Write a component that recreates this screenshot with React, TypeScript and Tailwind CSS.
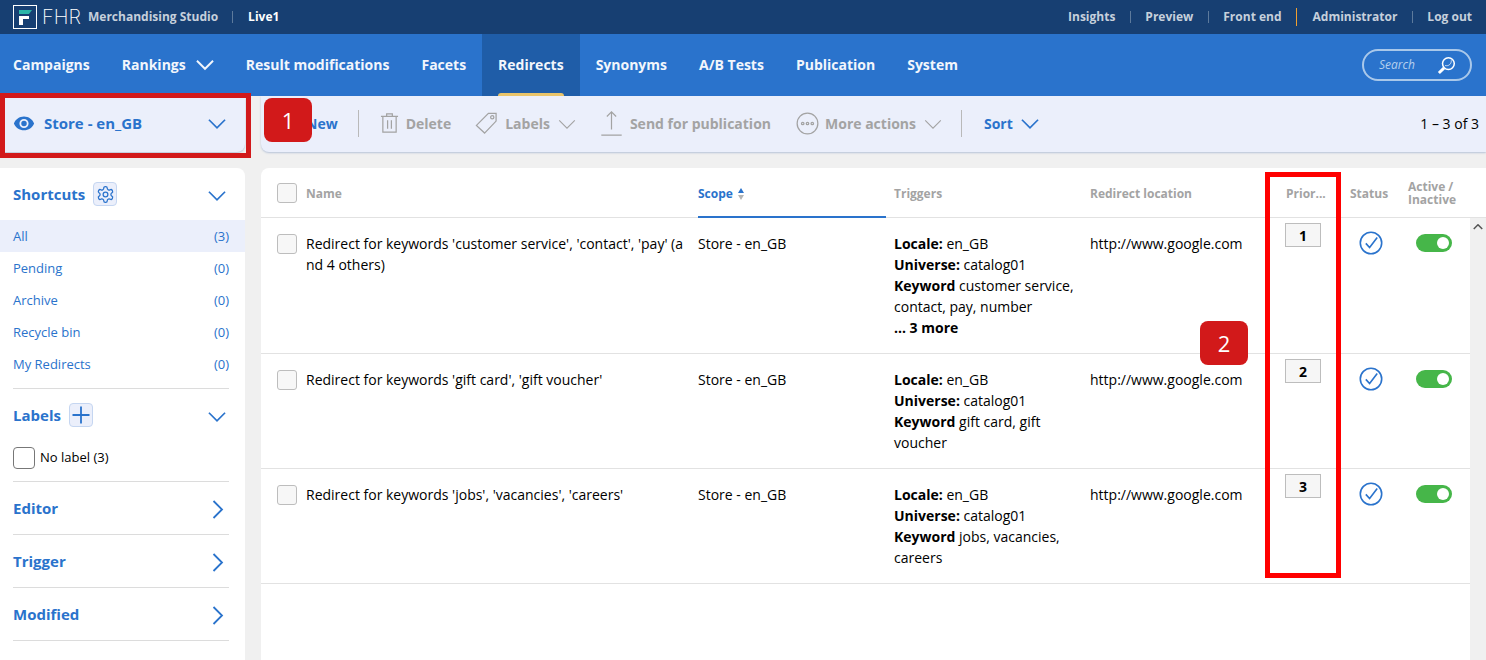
import React from "react";

const Chevron = ({ dir = "down", className = "", sw = 1.8 }: { dir?: "down" | "right" | "up"; className?: string; sw?: number }) => {
  const d = dir === "down" ? "M1 1.5 L9.5 10 L18 1.5" : dir === "right" ? "M1.5 1 L10 9.5 L1.5 18" : "M1 10 L9.5 1.5 L18 10";
  const vb = dir === "right" ? "0 0 12 19" : "0 0 19 12";
  return (
    <svg viewBox={vb} fill="none" stroke="currentColor" strokeWidth={sw} className={className}>
      <path d={d} />
    </svg>
  );
};

const Trigger = ({ kw, more }: { kw: string; more?: boolean }) => (
  <div className="w-[184px]">
    <div><b className="font-bold">Locale:</b> en_GB</div>
    <div><b className="font-bold">Universe:</b> catalog01</div>
    <div><b className="font-bold">Keyword</b> {kw}</div>
    {more && <div className="font-bold">... 3 more</div>}
  </div>
);

const Row = ({ name, kw, more, prio, h }: { name: string; kw: string; more?: boolean; prio: number; h: string }) => (
  <div className={`grid grid-cols-[437px_196px_196px_195px_65px_58px_78px] border-b border-[#e2e2e2] text-[14px] leading-[21px] text-black ${h}`}>
    <div className="flex pl-4 pt-4">
      <span className="h-5 w-5 shrink-0 rounded-[3px] border border-[#bdbdbd] bg-[#f7f7f7]" />
      <div className="-mt-px ml-[9px] w-[378px] break-all">{name}</div>
    </div>
    <div className="pt-[15px]">Store - en_GB</div>
    <div className="pt-[15px]"><Trigger kw={kw} more={more} /></div>
    <div className="pt-[15px]">http://www.google.com</div>
    <div className="pt-[5px]">
      <div className="flex h-6 w-9 items-center justify-center border border-[#bdbdbd] bg-[#f6f6f6] text-[14px] font-bold">{prio}</div>
    </div>
    <div className="pt-[13px] pl-[9px]">
      <svg viewBox="0 0 24 24" className="h-6 w-6 text-[#2a73cc]" fill="none" stroke="currentColor" strokeWidth="1.6">
        <circle cx="12" cy="12" r="10.7" />
        <path d="M6.8 12.4 L10.6 16.6 L18.2 6.6" />
      </svg>
    </div>
    <div className="pt-[16px] pl-2">
      <div className="flex h-[18px] w-9 items-center justify-end rounded-full bg-[#46b649] pr-[3px]">
        <span className="h-3 w-3 rounded-full bg-white" />
      </div>
    </div>
  </div>
);

const Shortcut = ({ label, n, active }: { label: string; n: number; active?: boolean }) => (
  <div className={`flex h-8 items-center justify-between pl-[13px] pr-4 pt-0.5 text-[13px] text-[#2a73cc] ${active ? "bg-[#ebeffb]" : ""}`}>
    <span>{label}</span>
    <span>({n})</span>
  </div>
);

const Collapsed = ({ label }: { label: string }) => (
  <div className="ml-[13px] mr-4 flex h-[53px] items-center justify-between border-b border-[#dcdcdc] pr-[5px] text-[15px] font-bold text-[#2a73cc]">
    <span>{label}</span>
    <Chevron dir="right" className="mt-0.5 h-[19px] w-3" />
  </div>
);

const Sep = ({ orange }: { orange?: boolean }) => (
  <span className={orange ? "ml-[14px] mr-4 h-[18px] w-px bg-[#f0a030]" : "ml-[15px] mr-[14px] h-3 w-px bg-[#5d7a9c]"} />
);

const NavItem = ({ children, active }: { children: React.ReactNode; active?: boolean }) => (
  <div className={`relative flex h-full items-center px-4 pb-0.5 ${active ? "bg-[#1f5da8]" : ""}`}>
    {children}
    {active && <span className="absolute bottom-0 left-4 right-4 h-[3px] rounded-t bg-[#e9c46a]" />}
  </div>
);

const Disabled = ({ icon, label, chevron, cls }: { icon: React.ReactNode; label: string; chevron?: boolean; cls: string }) => (
  <div className={`flex items-center text-[14px] font-bold text-[#a3a3a3] ${cls}`}>
    {icon}
    <span>{label}</span>
    {chevron && <Chevron className="ml-[8px] mt-0.5 h-[11px] w-[18px]" sw={1.2} />}
  </div>
);

export default function App() {
  return (
    <div className="relative h-[660px] w-[1486px] overflow-hidden bg-[#f0f0f0]" style={{ fontFamily: '"Open Sans", sans-serif' }}>
      {/* Top bar */}
      <div className="flex h-[34px] items-center justify-between bg-[#173f72] pl-[13px] pr-[14px]">
        <div className="flex items-center">
          <svg viewBox="0 0 24 24" className="h-[24px] w-[24px]" fill="none">
            <rect x="0.5" y="0.5" width="23" height="23" stroke="#fff" />
            <path d="M6 5 H19 L16 9 H6 Z" fill="#2bb5a8" />
            <path d="M6 11 H16 V14 H10 V20 H6 Z" fill="#fff" />
          </svg>
          <span className="ml-[5px] w-[38px] text-[20px] font-extralight leading-none text-white" style={{ fontFamily: 'Inter, sans-serif' }}>FHR</span>
          <span className="ml-[8px] text-[12px] font-bold text-[#c6d0dc]">Merchandising Studio</span>
          <span className="ml-[14px] mr-[15px] h-3 w-px bg-[#5d7a9c]" />
          <span className="text-[12px] font-bold text-white">Live1</span>
        </div>
        <div className="flex items-center text-[12px] font-bold text-[#c6d0dc]">
          <span>Insights</span><Sep />
          <span>Preview</span><Sep />
          <span>Front end</span><Sep orange />
          <span>Administrator</span><Sep />
          <span>Log out</span>
        </div>
      </div>

      {/* Nav */}
      <div className="flex h-[62px] items-center justify-between bg-[#2a73cc] pr-[14px] text-[14px] font-bold text-[#f2f6fc]">
        <div className="-ml-[3px] flex h-full items-center">
          <NavItem>Campaigns</NavItem>
          <NavItem>
            Rankings
            <Chevron className="ml-[10px] mt-0.5 h-3 w-[18px]" sw={2} />
          </NavItem>
          <NavItem>Result modifications</NavItem>
          <NavItem>Facets</NavItem>
          <NavItem active>Redirects</NavItem>
          <NavItem>Synonyms</NavItem>
          <NavItem>A/B Tests</NavItem>
          <NavItem>Publication</NavItem>
          <NavItem>System</NavItem>
        </div>
        <div className="flex h-8 w-[110px] items-center justify-between rounded-full border-2 border-[#a9c8ea] pl-[15px] pr-[14px]">
          <span className="text-[12px] font-normal italic text-[#b5d0ee]">Search</span>
          <svg viewBox="0 0 20 20" className="h-[19px] w-[19px] text-white" fill="none" stroke="currentColor">
            <circle cx="12" cy="8" r="6.2" strokeWidth="1.6" />
            <path d="M8.500 10.500 A5 5 0 0 0 15 5" strokeWidth="0.8" transform="translate(0 -0.5)" />
            <path d="M7.5 12.5 L2 18" strokeWidth="3" />
          </svg>
        </div>
      </div>

      {/* Toolbar row */}
      <div className="flex h-[56px]">
        <div className="flex w-[245px] items-center justify-between rounded-br-lg bg-[#ebeffb] pb-[2px] pl-[13px] pr-[19px] shadow-[0_1px_2px_rgba(100,130,180,0.4)]">
          <div className="flex items-center text-[15px] font-bold text-[#2a73cc]">
            <svg viewBox="0 0 24 24" className="mr-[9px] h-[22px] w-[22px]" fill="currentColor">
              <path d="M12 5C7 5 2.7 8.100 1 12.500 2.700 16.900 7 20 12 20s9.300-3.100 11-7.500C21.300 8.100 17 5 12 5zm0 12.500a5 5 0 1 1 0-10 5 5 0 0 1 0 10zm0-8a3 3 0 1 0 0 6 3 3 0 0 0 0-6z" />
            </svg>
            Store - en_GB
          </div>
          <Chevron className="mt-0.5 h-3 w-[18px] text-[#2a73cc]" />
        </div>
        <div className="ml-4 flex flex-1 items-center rounded-bl-lg bg-[#ebeffb] pb-[2px] pr-[7px] shadow-[0_1px_2px_rgba(100,130,180,0.4)]">
          <span className="ml-[45px] text-[14px] font-bold text-[#2a73cc]">New</span>
          <span className="ml-[20px] h-[27px] w-px bg-[#b9b9b9]" />
          <Disabled
            cls="ml-[21px]"
            label="Delete"
            icon={
              <svg viewBox="0 0 20 22" className="mr-[7px] h-[22px] w-[19px]" fill="none" stroke="currentColor" strokeWidth="1.3">
                <path d="M1 4 H19 M7 4 V1.500 H13 V4 M3 4 V20.500 H17 V4 M8 8 V17 M12 8 V17" />
              </svg>
            }
          />
          <Disabled
            cls="ml-[24px]"
            label="Labels"
            chevron
            icon={
              <svg viewBox="0 0 24 24" className="mr-[7px] h-[24px] w-[23px]" fill="none" stroke="currentColor" strokeWidth="1.3">
                <path d="M14 2 H22 V10 L10 22.500 L1.500 14.500 Z" />
                <circle cx="18" cy="6" r="1.700" />
              </svg>
            }
          />
          <Disabled
            cls="ml-[24px]"
            label="Send for publication"
            icon={
              <svg viewBox="0 0 24 28" className="mr-[7px] h-[26px] w-[23px]" fill="none" stroke="currentColor" strokeWidth="1.3">
                <path d="M12 21 V2 M7 7 L12 2 L17 7 M1 27 H23" />
              </svg>
            }
          />
          <Disabled
            cls="ml-[25px]"
            label="More actions"
            chevron
            icon={
              <svg viewBox="0 0 24 24" className="mr-[6px] h-[23px] w-[23px]" fill="none" stroke="currentColor" strokeWidth="1.3">
                <circle cx="12" cy="12" r="10.800" />
                <circle cx="7" cy="12" r="1.300" />
                <circle cx="12" cy="12" r="1.300" />
                <circle cx="17" cy="12" r="1.300" />
              </svg>
            }
          />
          <span className="ml-[19px] h-[27px] w-px bg-[#b9b9b9]" />
          <span className="ml-[22px] text-[14px] font-bold text-[#2a73cc]">Sort</span>
          <Chevron className="ml-[8px] mt-0.5 h-3 w-[18px] text-[#2a73cc]" />
          <span className="ml-auto text-[14px] text-black">1 – 3 of 3</span>
        </div>
      </div>

      {/* Body */}
      <div className="mt-4 flex h-[492px]">
        <div className="w-[245px] rounded-tr-lg bg-white">
          <div className="flex h-[52px] items-center justify-between pl-[13px] pr-[19px] text-[#2a73cc]">
            <div className="flex items-center text-[15px] font-bold">
              Shortcuts
              <span className="ml-2 flex h-6 w-6 items-center justify-center rounded border border-[#c5d6f1] bg-[#ebeffb]">
                <svg viewBox="0 0 24 24" className="h-[19px] w-[19px]" fill="none" stroke="currentColor" strokeWidth="1.6">
                  <path d="M12.22 2h-.44a2 2 0 0 0-2 2v.18a2 2 0 0 1-1 1.730l-.43.250a2 2 0 0 1-2 0l-.150-.080a2 2 0 0 0-2.730.730l-.220.380a2 2 0 0 0 .730 2.730l.150.100a2 2 0 0 1 1 1.720v.510a2 2 0 0 1-1 1.740l-.150.090a2 2 0 0 0-.730 2.730l.220.380a2 2 0 0 0 2.730.730l.150-.080a2 2 0 0 1 2 0l.430.250a2 2 0 0 1 1 1.730V20a2 2 0 0 0 2 2h.440a2 2 0 0 0 2-2v-.180a2 2 0 0 1 1-1.730l.430-.250a2 2 0 0 1 2 0l.150.080a2 2 0 0 0 2.730-.730l.220-.390a2 2 0 0 0-.730-2.730l-.150-.080a2 2 0 0 1-1-1.740v-.500a2 2 0 0 1 1-1.740l.150-.090a2 2 0 0 0 .730-2.730l-.220-.380a2 2 0 0 0-2.730-.730l-.150.080a2 2 0 0 1-2 0l-.430-.250a2 2 0 0 1-1-1.730V4a2 2 0 0 0-2-2z" />
                  <circle cx="12" cy="12" r="3" />
                </svg>
              </span>
            </div>
            <Chevron className="mt-1 h-3 w-[18px]" />
          </div>
          <Shortcut label="All" n={3} active />
          <Shortcut label="Pending" n={0} />
          <Shortcut label="Archive" n={0} />
          <Shortcut label="Recycle bin" n={0} />
          <Shortcut label="My Redirects" n={0} />
          <div className="ml-[13px] mr-4 mt-2 border-t border-[#dcdcdc]" />
          <div className="flex h-[52px] items-center justify-between pl-[13px] pr-[19px] text-[#2a73cc]">
            <div className="flex items-center text-[15px] font-bold">
              Labels
              <span className="ml-2 flex h-6 w-6 items-center justify-center rounded border border-[#c5d6f1] bg-[#ebeffb]">
                <svg viewBox="0 0 20 20" className="h-[20px] w-[20px]" fill="none" stroke="currentColor" strokeWidth="1.800">
                  <path d="M10 1.500 V18.500 M1.500 10 H18.500" />
                </svg>
              </span>
            </div>
            <Chevron className="mt-1 h-3 w-[18px]" />
          </div>
          <div className="ml-[13px] mr-4 mt-[6px] flex h-[35px] items-start border-b border-[#dcdcdc] text-[13px] text-black">
            <span className="mr-[5px] h-[22px] w-[22px] rounded-[4px] border border-[#777] bg-white" />
            <span className="leading-[20px]">No label (3)</span>
          </div>
          <Collapsed label="Editor" />
          <Collapsed label="Trigger" />
          <Collapsed label="Modified" />
        </div>

        <div className="ml-4 flex-1 rounded-tl-lg bg-white">
          <div className="grid h-[50px] grid-cols-[437px_196px_196px_195px_65px_58px_78px] border-b border-[#e2e2e2] text-[12px] font-bold text-[#a3a3a3]">
            <div className="flex items-center pl-4">
              <span className="h-5 w-5 rounded-[3px] border border-[#bdbdbd] bg-[#f7f7f7]" />
              <span className="ml-[9px] mt-0.5">Name</span>
            </div>
            <div className="relative -mb-px flex w-[188px] items-center border-b-2 border-[#2a73cc] pt-[3px] text-[#2a73cc]">
              Scope
              <svg viewBox="0 0 8 14" className="ml-[4px] h-[14px] w-2">
                <path d="M4 1 L7 6 H1 Z" fill="#2a73cc" />
                <path d="M4 13 L7 8 H1 Z" fill="#b5b5b5" />
              </svg>
            </div>
            <div className="flex items-center pt-0.5">Triggers</div>
            <div className="flex items-center pt-0.5">Redirect location</div>
            <div className="flex items-center pl-px pt-0.5">Prior...</div>
            <div className="flex items-center pt-0.5">Status</div>
            <div className="flex items-center leading-[13px]">Active /<br />Inactive</div>
          </div>
          <div className="relative">
            <Row h="h-[136px]" prio={1} name="Redirect for keywords 'customer service', 'contact', 'pay' (and 4 others)" kw="customer service, contact, pay, number" more />
            <Row h="h-[115px]" prio={2} name="Redirect for keywords 'gift card', 'gift voucher'" kw="gift card, gift voucher" />
            <Row h="h-[115px]" prio={3} name="Redirect for keywords 'jobs', 'vacancies', 'careers'" kw="jobs, vacancies, careers" />
            <div className="absolute right-0 top-0 w-4 bg-[#f0f0f0]" style={{ height: 442 }}>
              <Chevron dir="up" className="ml-[3px] mt-[6px] h-[6px] w-[10px] text-[#555]" sw={3} />
            </div>
          </div>
        </div>
      </div>

      {/* Annotations */}
      <div className="absolute left-0 top-[93px] h-[65px] w-[251px] border-[5px] border-[#d2191a]" />
      <div className="absolute left-[264px] top-[98px] flex h-11 w-12 items-center justify-center rounded-lg bg-[#d2191a] text-[22px] text-white">1</div>
      <div className="absolute left-[1200px] top-[321px] flex h-11 w-12 items-center justify-center rounded-lg bg-[#d2191a] text-[22px] text-white">2</div>
      <div className="absolute left-[1265px] top-[172px] h-[406px] w-[76px] border-[5px] border-[#ff0000]" />
    </div>
  );
}
